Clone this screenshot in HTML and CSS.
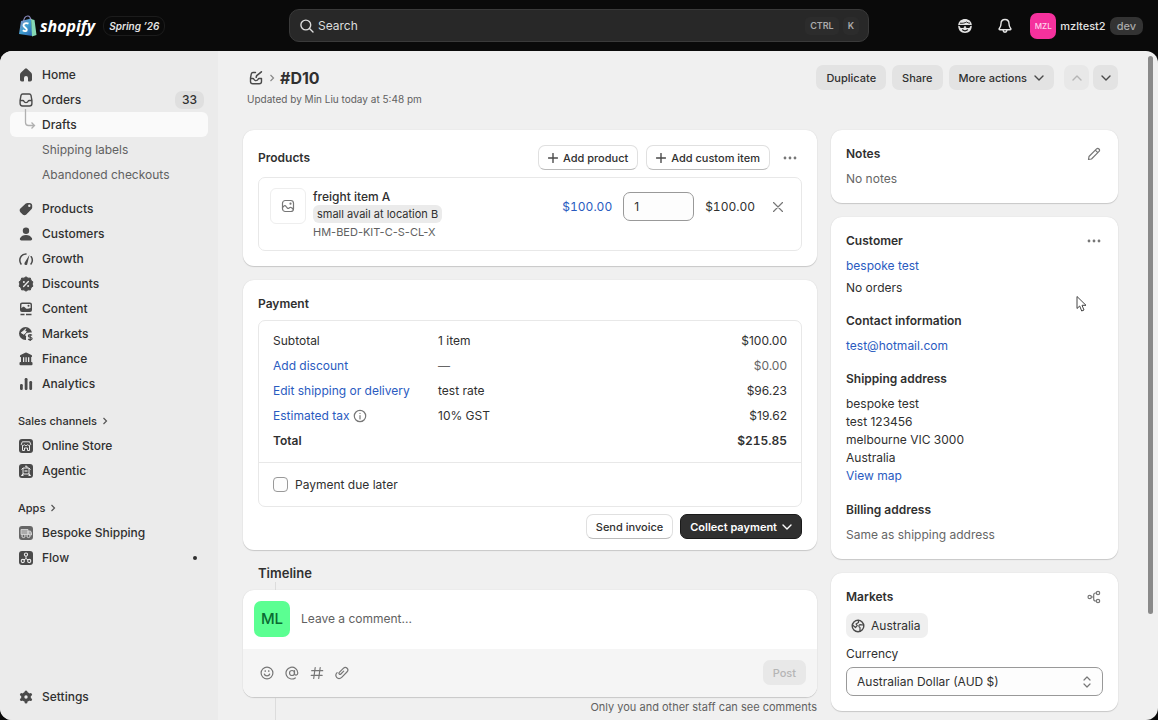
FILE: index.html
```html
<!DOCTYPE html>
<html lang="en">
<head>
    <meta charset="UTF-8">
    <title>#D10 · Drafts</title>
    <link rel="stylesheet" href="styles.css">
</head>
<body>
<header class="topbar">
    <a class="brand" href="#">
        <svg class="bag" width="19" height="22" viewBox="0 0 19 22">
            <defs>
                <linearGradient id="bagFill" x1="0" y1="0" x2="1" y2="1">
                    <stop offset="0" stop-color="#8f8fc4"/>
                    <stop offset=".5" stop-color="#3f9fd0"/>
                    <stop offset="1" stop-color="#2a5fb0"/>
                </linearGradient>
            </defs>
            <path d="M3 6l10-2.500 1.500 17.500L1 19z" fill="url(#bagFill)"/>
            <path d="M13 3.500l1.500 1 2 .5L18.500 20 14 21.500z" fill="#86d9b4"/>
            <path d="M5.500 6.500C6 3 8 1 9.800 1s2.700 1.500 2.700 4" fill="none" stroke="#8f8fc4" stroke-width="1.200"/>
            <path d="M10.500 8.700C8 7.500 5.300 8.500 5.500 10.700c.2 1.900 3.300 2 3.300 4 0 1.700-2.300 1.800-4 .6" fill="none" stroke="#fff" stroke-width="1.900"/>
        </svg>
        <span class="brand-name">shopify</span>
        <span class="edition">Spring ’26</span>
    </a>
    <label class="search">
        <svg width="14" height="14" viewBox="0 0 14 14"><path d="M9.500 9.500L13 13M10.700 6a4.900 4.900 0 1 1-9.800 0 4.900 4.900 0 0 1 9.800 0z" fill="none" stroke="#ddd" stroke-width="1.400" stroke-linecap="round"/></svg>
        <input class="search-input" type="text" placeholder="Search" aria-label="Search">
        <kbd>CTRL</kbd>
        <kbd>K</kbd>
    </label>
    <div class="account">
        <button class="top-icon" type="button" aria-label="Sidekick">
            <svg width="16" height="16" viewBox="0 0 16 16"><path d="M8 1C4.500 1 1.500 3.300 1.200 7c-.3 5 2.600 8 6.800 8s7.100-3 6.800-8C14.500 3.300 11.500 1 8 1z" fill="#e3e3e3"/><path d="M3 5.200c3 .3 4.800-.2 6.500-1.200 1.100.8 2.300 1.200 3.500 1.200" fill="none" stroke="#111" stroke-width=".9"/><path d="M1.200 7.500h13.600" stroke="#111"/><path d="M2.800 8h4.600v.8c0 1.700-4.600 1.700-4.600 0zM8.600 8h4.600v.8c0 1.700-4.600 1.700-4.600 0z" fill="#111"/><path d="M5.500 11.800c1.500 1.200 3.500 1.200 5 0" fill="none" stroke="#111" stroke-width="1.200" stroke-linecap="round"/></svg>
        </button>
        <button class="top-icon" type="button" aria-label="Notifications">
            <svg width="16" height="16" viewBox="0 0 16 16"><path d="M8 1.500c-2.500 0-4 1.800-4 4.200 0 2.800-.7 3.500-1.700 4.800-.5.700-.1 1.300.6 1.300h10.200c.7 0 1.100-.6.6-1.300C12.700 9.200 12 8.500 12 5.700c0-2.400-1.500-4.200-4-4.200zM6 12.200c.3 2.700 3.700 2.700 4 0" fill="none" stroke="#e3e3e3" stroke-width="1.400" stroke-linejoin="round"/></svg>
        </button>
        <button class="store" type="button">
            <span class="store-avatar">MZL</span>
            <span>mzltest2</span>
            <span class="store-tag">dev</span>
        </button>
    </div>
</header>

<div class="frame">
    <nav class="sidebar">
        <ul class="nav">
            <li><a class="nav-link" href="#">
                <svg width="16" height="16" viewBox="0 0 16 16"><path d="M7 1.800a1.500 1.500 0 0 1 2 0l4 3.700c.6.600 1 1.300 1 2.200v4.800c0 1.100-.8 2-1.800 2H11c-.6 0-1-.4-1-1V11a2 2 0 0 0-4 0v2.500c0 .6-.4 1-1 1H3.800c-1 0-1.800-.9-1.800-2V7.700c0-.9.400-1.600 1-2.200z"/></svg>
                Home</a></li>
            <li><a class="nav-link" href="#">
                <svg class="line" width="16" height="16" viewBox="0 0 16 16"><path d="M4.700 2h6.600c.9 0 1.500.5 1.700 1.300l.9 5v3.200c0 1.400-1 2.500-2.400 2.500h-7A2.500 2.500 0 0 1 2.100 11.500V8.300l.9-5C3.200 2.500 3.800 2 4.700 2zM2.100 8.500h2.600c.6 0 1 .3 1.200.8.700 1.700 3.500 1.700 4.200 0 .2-.5.600-.8 1.200-.8h2.600"/></svg>
                Orders<span class="count">33</span></a></li>
            <li><a class="nav-link current" href="#">
                <svg class="branch" width="16" height="25" viewBox="0 0 16 25"><path d="M7.500-3v13.500c0 2 1 3 3 3h6M13.500 10.500l3 3-3 3"/></svg>
                Drafts</a></li>
            <li><a class="nav-link sub" href="#">Shipping labels</a></li>
            <li><a class="nav-link sub" href="#">Abandoned checkouts</a></li>
        </ul>
        <ul class="nav">
            <li><a class="nav-link" href="#">
                <svg width="16" height="16" viewBox="0 0 16 16"><path fill-rule="evenodd" d="M7.800 2.600c.5-.5 1.100-.7 1.800-.7h2.100c1.400 0 2.500 1.100 2.500 2.500v2c0 .7-.3 1.400-.8 1.900l-5.100 5.200c-1 1-2.600 1-3.600 0l-2.300-2.300c-1-1-1-2.600 0-3.600zM11.300 6a1.200 1.200 0 1 0 0-2.400 1.200 1.200 0 0 0 0 2.400z"/></svg>
                Products</a></li>
            <li><a class="nav-link" href="#">
                <svg width="16" height="16" viewBox="0 0 16 16"><circle cx="8" cy="4.700" r="3.200"/><path d="M2 12.300C3 10 5.300 8.900 8 8.900s5 1.100 6 3.400c.5 1.300-.3 2.200-1.400 2.200H3.400c-1.100 0-1.900-.9-1.400-2.200z"/></svg>
                Customers</a></li>
            <li><a class="nav-link" href="#">
                <svg class="gauge" width="16" height="16" viewBox="0 0 16 16"><path d="M3 13C.2 8.500 2.800 3 8 3M13 13c1.600-2.300 1.600-5.200.2-7.300"/><path class="needle" d="M11.500 3.800L6.600 11.700a1.500 1.500 0 1 0 2.800.8z"/></svg>
                Growth</a></li>
            <li><a class="nav-link" href="#">
                <svg width="16" height="16" viewBox="0 0 16 16"><path d="M8 .8l2 1.400 2.400-.1.600 2.300 1.900 1.500L14.100 8l.8 2.200-1.900 1.400-.6 2.300-2.400-.1-2 1.400-2-1.400-2.400.1-.6-2.300-1.900-1.400L1.900 8l-.8-2.100L3 4.400l.6-2.300 2.400.1z" stroke="#4a4a4a" stroke-linejoin="round"/><path d="M5.600 10.400l4.800-4.800" stroke="#ebebeb" stroke-width="1.400" stroke-linecap="round"/><circle cx="5.900" cy="5.900" r="1" fill="#ebebeb"/><circle cx="10.100" cy="10.100" r="1" fill="#ebebeb"/></svg>
                Discounts</a></li>
            <li><a class="nav-link" href="#">
                <svg width="16" height="16" viewBox="0 0 16 16"><path fill-rule="evenodd" d="M4 1.500h8a2 2 0 0 1 2 2V9a2 2 0 0 1-2 2H4a2 2 0 0 1-2-2V3.500c0-1.100.9-2 2-2zm-.6 5.800C5 4.800 6.300 5.500 8 7.400c1.300.8 2.800 0 4.600-.4V3.700c0-.5-.3-.8-.8-.8H4.200c-.5 0-.8.300-.8.800z"/><circle cx="10.500" cy="4.700" r="1"/><path d="M2.500 13.500h4M8 13.500h5.500" stroke="#4a4a4a" stroke-width="1.400"/></svg>
                Content</a></li>
            <li><a class="nav-link" href="#">
                <svg width="16" height="16" viewBox="0 0 16 16"><circle cx="7.500" cy="7.500" r="6.500"/><path d="M8 2.500L6.600 4.600l1.700 1L6 8.300 3 6.500M14 7h-3.500c-2.500 0-3.500 2-2 3.500v4H14z" stroke="#ebebeb" stroke-width="1" fill="#ebebeb"/><path d="M8 2.500c2 0 4 1 4.700 3.500L9.500 6.500z" fill="#4a4a4a"/><path d="M14 9.300c-1-1-3.600-.9-3.600.6 0 1.800 3.700.9 3.700 2.700 0 1.500-2.900 1.600-3.900.4M12.200 8v7" fill="none" stroke="#4a4a4a" stroke-width="1.200"/></svg>
                Markets</a></li>
            <li><a class="nav-link" href="#">
                <svg width="16" height="16" viewBox="0 0 16 16"><path d="M7.200 1.700a2 2 0 0 1 1.600 0l4.600 2.200c1.100.6.800 2.300-.5 2.300H3.100c-1.300 0-1.600-1.700-.5-2.300zM3 6h2v6H3zM6.200 6h1.300v6H6.200zM8.700 6H10v6H8.700zM11.300 6h1.900v6h-1.900z"/><rect x="1.500" y="11" width="13" height="3.200" rx="1"/></svg>
                Finance</a></li>
            <li><a class="nav-link" href="#">
                <svg width="16" height="16" viewBox="0 0 16 16"><rect x="2" y="8" width="2.800" height="6" rx="1.200"/><rect x="6.700" y="2" width="2.800" height="12" rx="1.200"/><rect x="11.300" y="5" width="2.800" height="9" rx="1.200"/></svg>
                Analytics</a></li>
        </ul>
        <h2 class="nav-title">Sales channels
            <svg width="6" height="8" viewBox="0 0 6 8"><path d="M1.500 1l3 3-3 3"/></svg>
        </h2>
        <ul class="nav">
            <li><a class="nav-link" href="#">
                <svg width="16" height="16" viewBox="0 0 16 16"><rect x="1" y="1" width="14" height="14" rx="3"/><path d="M4.300 3.800h7.400l1 2.700c-.8 1.400-2.300 1.200-3 .2-.9 1.200-2.500 1.200-3.400 0-.7 1-2.200 1.200-3-.2zM4.500 8v4.500h2V10h3v2.500h2V8" fill="none" stroke="#ebebeb"/></svg>
                Online Store</a></li>
            <li><a class="nav-link" href="#">
                <svg width="16" height="16" viewBox="0 0 16 16"><rect x="1" y="1" width="14" height="14" rx="3"/><path d="M5 5h6v6H5zM7 3.200h2V5M3.500 6.500L5 5M12.500 6.500L11 5M3.500 12.200L5.500 10.800M12.500 12.200l-2-1.400M3.300 12.500h2.200M10.500 12.500h2.200" fill="none" stroke="#ebebeb"/><path d="M6.500 7h3v2h-3z" fill="#aaa"/></svg>
                Agentic</a></li>
        </ul>
        <h2 class="nav-title">Apps
            <svg width="6" height="8" viewBox="0 0 6 8"><path d="M1.500 1l3 3-3 3"/></svg>
        </h2>
        <ul class="nav">
            <li><a class="nav-link" href="#">
                <svg width="16" height="16" viewBox="0 0 16 16"><rect x="1" y="1" width="14" height="14" rx="3" fill="#666"/><path d="M3 4.500h7v5H3zM10 6h2.500l1 2v2H10z" fill="#aaa" stroke="#ddd" stroke-width=".8"/><circle cx="5.500" cy="11" r="1.600" fill="#666" stroke="#ddd"/><circle cx="10.500" cy="11" r="1.600" fill="#666" stroke="#ddd"/></svg>
                Bespoke Shipping</a></li>
            <li><a class="nav-link" href="#">
                <svg width="16" height="16" viewBox="0 0 16 16"><rect x="1" y="1" width="14" height="14" rx="3"/><path d="M8 6v2.500L5 10.500M8 8.500l3 2" stroke="#ebebeb" fill="none"/><g fill="#4a4a4a" stroke="#ebebeb" stroke-width="1.100"><circle cx="8" cy="4.600" r="1.600"/><circle cx="4.800" cy="11" r="1.600"/><circle cx="11.200" cy="11" r="1.600"/></g></svg>
                Flow<span class="dot"></span></a></li>
        </ul>
        <ul class="nav settings">
            <li><a class="nav-link" href="#">
                <svg width="16" height="16" viewBox="0 0 16 16"><circle cx="8" cy="8" r="3.300" fill="none" stroke="#4a4a4a" stroke-width="3.200"/><circle cx="8" cy="2.900" r="1.500"/><circle cx="8" cy="13.100" r="1.500"/><circle cx="3.500" cy="5.400" r="1.500"/><circle cx="12.500" cy="5.400" r="1.500"/><circle cx="3.500" cy="10.600" r="1.500"/><circle cx="12.500" cy="10.600" r="1.500"/></svg>
                Settings</a></li>
        </ul>
    </nav>

    <main class="page">
        <div class="page-head">
            <div>
                <div class="crumbs">
                    <a href="#" aria-label="Drafts"><svg class="line" width="16" height="16" viewBox="0 0 16 16"><path d="M7.500 2.500H5c-.8 0-1.500.5-1.700 1.300L2.500 8v3.500c0 1.400 1 2.300 2.300 2.300h6.400c1.300 0 2.300-.9 2.300-2.300V8.500M2.500 8.500h2.300c.5 0 .9.300 1.100.8.700 1.700 3.500 1.700 4.200 0 .2-.5.600-.8 1.100-.8h2.300"/><path d="M8.200 7.300l.5-1.700 4.700-3.800" stroke-width="1.600"/></svg></a>
                    <svg class="crumb-arrow" width="6" height="8" viewBox="0 0 6 8"><path d="M1.500 1l3 3-3 3"/></svg>
                    <h1>#D10</h1>
                </div>
                <p class="updated">Updated by Min Liu today at 5:48 pm</p>
            </div>
            <div class="actions">
                <button class="btn" type="button">Duplicate</button>
                <button class="btn" type="button">Share</button>
                <button class="btn" type="button">More actions
                    <svg width="10" height="6" viewBox="0 0 10 6"><path d="M1 1l4 4 4-4"/></svg>
                </button>
                <div class="pager">
                    <button class="btn square" type="button" aria-label="Previous" disabled><svg width="10" height="6" viewBox="0 0 10 6"><path d="M1 5l4-4 4 4"/></svg></button>
                    <button class="btn square" type="button" aria-label="Next"><svg width="10" height="6" viewBox="0 0 10 6"><path d="M1 1l4 4 4-4"/></svg></button>
                </div>
            </div>
        </div>

        <div class="columns">
            <div class="column">
                <section class="card">
                    <div class="card-head">
                        <h2>Products</h2>
                        <button class="btn outline" type="button">
                            <svg width="10" height="10" viewBox="0 0 10 10"><path d="M5 .5v9M.5 5h9"/></svg>
                            Add product</button>
                        <button class="btn outline" type="button">
                            <svg width="10" height="10" viewBox="0 0 10 10"><path d="M5 .5v9M.5 5h9"/></svg>
                            Add custom item</button>
                        <button class="icon-btn more" type="button" aria-label="More"><svg width="14" height="4" viewBox="0 0 14 4"><circle cx="2" cy="2" r="1.400"/><circle cx="7" cy="2" r="1.400"/><circle cx="12" cy="2" r="1.400"/></svg></button>
                    </div>
                    <div class="box product">
                        <div class="thumb">
                            <svg class="line grey" width="14" height="14" viewBox="0 0 14 14"><rect x="1.500" y="1.500" width="11" height="11" rx="2.800"/><path d="M1.500 8.500l1.300-1.300c.7-.7 1.600-.7 2.200.1l1.200 1.500c.5.700 1.300.8 2 .3l.7-.5c.6-.4 1.300-.3 1.800.2l1.500 1.400"/><circle cx="9.500" cy="4.700" r=".5"/></svg>
                        </div>
                        <div class="product-info">
                            <a class="product-name" href="#">freight item A</a>
                            <span class="variant">small avail at location B</span>
                            <span class="sku">HM-BED-KIT-C-S-CL-X</span>
                        </div>
                        <a class="price" href="#">$100.00</a>
                        <input class="quantity" type="text" value="1" aria-label="Quantity">
                        <span class="line-total">$100.00</span>
                        <button class="icon-btn" type="button" aria-label="Remove"><svg width="10" height="10" viewBox="0 0 10 10"><path d="M.5.5l9 9M9.500.5l-9 9"/></svg></button>
                    </div>
                </section>

                <section class="card payment">
                    <h2>Payment</h2>
                    <div class="box">
                        <table class="summary">
                            <tr><td>Subtotal</td><td>1 item</td><td>$100.00</td></tr>
                            <tr><td><a href="#">Add discount</a></td><td class="muted">—</td><td class="muted">$0.00</td></tr>
                            <tr><td><a href="#">Edit shipping or delivery</a></td><td>test rate</td><td>$96.23</td></tr>
                            <tr><td><div class="tax"><a href="#">Estimated tax</a>
                                <svg class="line grey" width="14" height="14" viewBox="0 0 14 14"><circle cx="7" cy="7" r="5.700"/><path d="M7 6.500V10M7 4.300v.1"/></svg></div></td><td>10% GST</td><td>$19.62</td></tr>
                            <tr class="total"><td>Total</td><td></td><td>$215.85</td></tr>
                        </table>
                        <label class="due-later">
                            <input type="checkbox">
                            Payment due later
                        </label>
                    </div>
                    <div class="card-foot">
                        <button class="btn outline" type="button">Send invoice</button>
                        <button class="btn primary" type="button">Collect payment
                            <svg width="10" height="6" viewBox="0 0 10 6"><path d="M1 1l4 4 4-4"/></svg>
                        </button>
                    </div>
                </section>

                <section class="timeline">
                    <h2>Timeline</h2>
                    <div class="timeline-body">
                        <form class="comment" action="#">
                            <div class="comment-write">
                                <span class="avatar">ML</span>
                                <input type="text" placeholder="Leave a comment..." aria-label="Comment">
                            </div>
                            <div class="comment-tools">
                                <button class="tool" type="button" aria-label="Emoji"><svg class="line grey" width="14" height="14" viewBox="0 0 14 14"><circle cx="7" cy="7" r="5.900"/><path d="M4.300 8c.6 2.500 4.800 2.500 5.400 0M5.200 4.700v.8M8.800 4.700v.8"/></svg></button>
                                <button class="tool" type="button" aria-label="Mention"><svg class="line grey" width="14" height="14" viewBox="0 0 14 14"><circle cx="7" cy="7" r="2.500"/><path d="M9.500 4.500v3.200c0 2 3.300 1.800 3.300-.7a5.900 5.900 0 1 0-2.500 4.900"/></svg></button>
                                <button class="tool" type="button" aria-label="Hashtag"><svg class="line grey" width="14" height="14" viewBox="0 0 14 14"><path d="M5.200 1.500L3.700 12.500M10.200 1.500L8.700 12.500M1.700 4.700h11M1.200 9.300h11"/></svg></button>
                                <button class="tool" type="button" aria-label="Attach"><svg class="line grey" width="14" height="14" viewBox="0 0 14 14"><path d="M8.700 5.200L5.900 8c-1.100 1.100-2.700-.5-1.600-1.600l4-4c2.700-2.600 6.200 1 3.600 3.600L6.700 11.300c-3.600 3.600-7.800-1.300-4.600-4.600"/></svg></button>
                                <button class="btn post" type="submit" disabled>Post</button>
                            </div>
                        </form>
                        <p class="staff-note">Only you and other staff can see comments</p>
                    </div>
                </section>
            </div>

            <div class="column">
                <section class="card side">
                    <div class="side-head">
                        <h2>Notes</h2>
                        <button class="icon-btn" type="button" aria-label="Edit notes"><svg class="line grey" width="14" height="14" viewBox="0 0 14 14"><path d="M1.500 12.500l.5-3 7.300-7.300c1.900-1.900 4.400.6 2.500 2.500L4.500 12zM8.300 3.200l2.500 2.500"/></svg></button>
                    </div>
                    <p class="muted">No notes</p>
                </section>

                <section class="card side customer">
                    <div class="side-head">
                        <h2>Customer</h2>
                        <button class="icon-btn" type="button" aria-label="More"><svg width="14" height="4" viewBox="0 0 14 4"><circle cx="2" cy="2" r="1.400"/><circle cx="7" cy="2" r="1.400"/><circle cx="12" cy="2" r="1.400"/></svg></button>
                    </div>
                    <a href="#">bespoke test</a>
                    <p class="orders">No orders</p>
                    <h3>Contact information</h3>
                    <a href="#">test@hotmail.com</a>
                    <h3>Shipping address</h3>
                    <address>bespoke test<br>test 123456<br>melbourne VIC 3000<br>Australia<br><a href="#">View map</a></address>
                    <h3>Billing address</h3>
                    <p class="muted">Same as shipping address</p>
                    <svg class="pointer" width="12" height="18" viewBox="0 0 12 18"><path d="M1 1.500v12l2.700-2.500 2 5 2.300-1-2-4.700h4z" fill="#fff" stroke="#444"/></svg>
                </section>

                <section class="card side">
                    <div class="side-head">
                        <h2>Markets</h2>
                        <button class="icon-btn" type="button" aria-label="View markets"><svg class="line grey" width="14" height="14" viewBox="0 0 14 14"><circle cx="2.700" cy="7" r="1.700"/><circle cx="11" cy="3" r="1.700"/><circle cx="11" cy="11" r="1.700"/><path d="M9.300 3H8.500C7.300 3 6.700 4 6.700 5v4c0 1 .6 2 1.800 2h.8M4.400 7h2.300"/></svg></button>
                    </div>
                    <span class="market">
                        <svg class="line" width="14" height="14" viewBox="0 0 14 14"><circle cx="7" cy="7" r="5.800"/><path d="M1.500 6l3 2.500 1.800-1.800L5 5l2.500-1.500V1.300M12.500 6L9 5.700C7.500 6 7.500 8 9 8.500v3.800" stroke-width="1.200"/></svg>
                        Australia
                    </span>
                    <label class="currency-label" for="currency">Currency</label>
                    <div class="select">
                        <select id="currency"><option>Australian Dollar (AUD $)</option></select>
                        <svg class="line grey" width="8" height="12" viewBox="0 0 8 12"><path d="M1 4l3-3 3 3M1 8l3 3 3-3"/></svg>
                    </div>
                </section>
            </div>
        </div>
    </main>
    <div class="scrollbar"><div class="scroll-thumb"></div></div>
</div>
</body>
</html>
```
FILE: styles.css
```css
* {
    box-sizing: border-box;
}

body {
    margin: 0;
    height: 100vh;
    display: flex;
    flex-direction: column;
    overflow: hidden;
    background: #0a0a0a;
    color: #303030;
    font-family: Inter, "Liberation Sans", sans-serif;
    font-size: 12px;
    line-height: 18px;
}

h1, h2, h3, p, ul {
    margin: 0;
    padding: 0;
}

h2, h3 {
    font-size: 12px;
    font-weight: 600;
}

ul {
    list-style: none;
}

a {
    color: #2a5bbf;
    text-decoration: none;
}

button, input, select {
    font: inherit;
    color: inherit;
}

button {
    border: none;
    background: none;
    padding: 0;
}

svg {
    display: block;
    flex: none;
}

.line {
    fill: none;
    stroke: #4a4a4a;
    stroke-width: 1.4;
    stroke-linecap: round;
    stroke-linejoin: round;
}

.line.grey {
    stroke: #777;
    stroke-width: 1.2;
}

.muted {
    color: #666;
}

/* top bar */
.topbar {
    flex: none;
    height: 51px;
    display: grid;
    grid-template-columns: 1fr 580px 1fr;
    align-items: center;
    padding: 0 15px;
}

.brand {
    display: flex;
    align-items: center;
    padding-left: 3px;
    color: #fff;
}

.brand-name {
    margin-left: 3px;
    font-family: "Open Sans", sans-serif;
    font-size: 16px;
    font-weight: 700;
    font-style: italic;
}

.edition {
    margin-left: 8px;
    padding: 0 5px;
    border: 1px solid #1c1c1c;
    border-radius: 9px;
    font-size: 10px;
    font-weight: 600;
    font-style: italic;
    color: #e3e3e3;
}

.search {
    display: flex;
    align-items: center;
    gap: 4px;
    height: 33px;
    padding: 0 9px 0 10px;
    border: 1px solid #3a3a3a;
    border-radius: 10px;
    background: #282828;
}

.search-input {
    flex: 1;
    min-width: 0;
    padding: 0;
    border: none;
    outline: none;
    background: none;
    color: #ddd;
}

.search-input::placeholder {
    color: #ddd;
    opacity: 1;
}

kbd {
    padding: 0 5px;
    border-radius: 5px;
    background: #2c2c2c;
    color: #aaa;
    font-family: inherit;
    font-size: 9px;
    font-weight: 600;
}

.account {
    display: flex;
    justify-content: flex-end;
    align-items: center;
    gap: 24px;
}

.store {
    display: flex;
    align-items: center;
    gap: 4px;
    margin-left: -7px;
    color: #e3e3e3;
    font-size: 11px;
    font-weight: 550;
}

.store-avatar {
    width: 26px;
    line-height: 26px;
    border-radius: 7px;
    background: #f5319d;
    color: #ffd5ec;
    font-size: 8px;
    text-align: center;
}

.store-tag {
    padding: 0 7px;
    border-radius: 7px;
    background: #333;
    color: #aaa;
    font-weight: 500;
}

/* frame */
.frame {
    flex: 1;
    min-height: 0;
    display: flex;
    overflow: hidden;
    border-radius: 12px;
    background: #f0f0f0;
}

.sidebar {
    flex: none;
    width: 218px;
    display: flex;
    flex-direction: column;
    padding: 11px 10px;
    background: #ebebeb;
}

.nav + .nav {
    margin-top: 9px;
}

.nav .nav-link {
    display: flex;
    align-items: center;
    gap: 8px;
    height: 25px;
    padding: 0 8px;
    border-radius: 6px;
    color: #303030;
    font-weight: 500;
}

.nav-link svg {
    fill: #4a4a4a;
}

.nav-link svg.line {
    fill: none;
}

.nav-link .gauge {
    fill: none;
    stroke: #4a4a4a;
    stroke-width: 1.5;
    stroke-linecap: round;
}

.gauge .needle {
    fill: #4a4a4a;
    stroke: none;
}

.nav-link.current {
    background: #fafafa;
}

.nav-link svg.branch {
    fill: none;
    stroke: #b0b0b0;
    stroke-width: 1.3;
    overflow: visible;
}

.nav .nav-link.sub {
    padding-left: 32px;
    color: #616161;
    font-weight: 400;
}

.count {
    margin-left: auto;
    margin-right: -4px;
    padding: 0 7px;
    border-radius: 7px;
    background: #dfdfdf;
}

.dot {
    width: 4px;
    height: 4px;
    margin-left: auto;
    margin-right: 3px;
    border-radius: 50%;
    background: #303030;
}

.nav-title {
    display: flex;
    align-items: center;
    gap: 5px;
    margin-top: 13px;
    padding: 3px 8px;
    font-size: 11px;
    font-weight: 500;
}

.nav-title svg {
    fill: none;
    stroke: #555;
    stroke-width: 1.2;
}

.nav.settings {
    margin-top: auto;
}

/* page */
.page {
    flex: 1;
    min-width: 0;
    padding: 14px 30px 0 25px;
    overflow: hidden;
}

.scrollbar {
    flex: none;
    width: 10px;
    padding-top: 5px;
}

.scroll-thumb {
    width: 5px;
    height: 84%;
    border-radius: 3px;
    background: #8a8a8a;
}

.page-head {
    display: flex;
    justify-content: space-between;
    align-items: flex-start;
    margin-bottom: 22px;
}

.crumbs {
    display: flex;
    align-items: center;
    gap: 5px;
    height: 25px;
    padding-left: 5px;
}

.crumb-arrow {
    fill: none;
    stroke: #888;
    stroke-width: 1.2;
}

h1 {
    font-size: 16px;
    font-weight: 650;
}

.updated {
    padding-left: 4px;
    color: #616161;
    font-size: 10px;
}

.actions {
    display: flex;
    gap: 6px;
}

.pager {
    display: flex;
    gap: 4px;
    margin-left: 4px;
}

.btn {
    display: flex;
    align-items: center;
    justify-content: center;
    gap: 7px;
    height: 25px;
    padding: 0 10px;
    border-radius: 7px;
    background: #e3e3e3;
    font-size: 11px;
    font-weight: 550;
    white-space: nowrap;
}

.btn svg, .icon-btn svg {
    fill: none;
    stroke: #4a4a4a;
    stroke-width: 1.4;
    stroke-linecap: round;
    stroke-linejoin: round;
}

.btn.square {
    width: 25px;
    padding: 0;
}

.btn:disabled {
    background: #e8e8e8;
    color: #b5b5b5;
}

.btn:disabled svg {
    stroke: #b5b5b5;
}

.btn.outline, .btn.primary {
    gap: 5px;
    padding: 0 9px;
}

.btn.outline {
    border: 1px solid #e0e0e0;
    border-bottom-color: #bbb;
    background: #fff;
}

.btn.primary {
    border: 1px solid #1a1a1a;
    background: #303030;
    color: #fff;
    font-weight: 600;
}

.btn.primary svg {
    stroke: #fff;
}

.icon-btn {
    display: grid;
    place-items: center;
}

.icon-btn svg {
    stroke: #777;
    stroke-width: 1.2;
}

.icon-btn circle {
    fill: #777;
    stroke: none;
}

.icon-btn .line circle {
    fill: none;
    stroke: #777;
}

.columns {
    display: grid;
    grid-template-columns: 2fr 1fr;
    gap: 14px;
    align-items: start;
}

.column {
    display: grid;
    gap: 14px;
    min-width: 0;
}

.card {
    padding: 15px;
    border-radius: 11px;
    background: #fff;
    box-shadow: 0 1px 1px #c8c8c8, 0 0 1px #ccc;
}

.card-head {
    display: flex;
    align-items: center;
    gap: 8px;
    margin-bottom: 7px;
}

.card-head h2 {
    margin-right: auto;
}

.icon-btn.more {
    width: 24px;
}

.box {
    border: 1px solid #e8e8e8;
    border-radius: 7px;
}

.product {
    display: flex;
    align-items: flex-start;
    padding: 10px 18px 9px 11px;
}

.thumb {
    display: grid;
    place-items: center;
    width: 36px;
    height: 36px;
    border: 1px solid #eee;
    border-radius: 6px;
}

.product-info {
    flex: 1;
    display: flex;
    flex-direction: column;
    align-items: flex-start;
    margin-left: 7px;
}

.product-name {
    line-height: 17px;
    color: #303030;
    font-weight: 500;
}

.variant {
    padding: 0 4px;
    border-radius: 6px;
    background: #ebebeb;
    font-size: 11px;
}

.sku {
    color: #616161;
    font-size: 11px;
}

.price, .line-total, .product .icon-btn {
    height: 38px;
    line-height: 38px;
}

.price, .line-total {
    font-variant-numeric: tabular-nums;
}

.quantity {
    width: 71px;
    height: 29px;
    margin: 4px 11px 0;
    padding: 0 10px;
    border: 1px solid #999;
    border-radius: 7px;
    background: #fdfdfd;
}

.product .icon-btn {
    margin-left: 18px;
}

.card.payment {
    padding-bottom: 11px;
}

.payment h2 {
    margin-bottom: 7px;
}

.summary {
    width: 100%;
    padding: 7px 14px 9px;
    border-spacing: 0;
}

.summary td {
    height: 25px;
    padding: 0;
}

.summary td:first-child {
    width: 165px;
}

.summary td:last-child {
    text-align: right;
}

.total {
    font-weight: 600;
}

.total td:last-child {
    font-variant-numeric: tabular-nums;
}

.tax {
    display: flex;
    align-items: center;
    gap: 4px;
}

.due-later {
    display: flex;
    align-items: center;
    gap: 7px;
    height: 44px;
    padding: 0 14px;
    border-top: 1px solid #e8e8e8;
}

.due-later input {
    appearance: none;
    width: 15px;
    height: 15px;
    margin: 0;
    border: 1px solid #999;
    border-radius: 4px;
    background: #fdfdfd;
}

.card-foot {
    display: flex;
    justify-content: flex-end;
    gap: 7px;
    margin-top: 7px;
}

/* timeline */
.timeline h2 {
    padding-left: 15px;
    font-size: 13px;
}

/* the rail runs behind the comment card */
.timeline-body {
    padding-top: 8px;
    background: linear-gradient(#dcdcdc, #dcdcdc) 32px 0 / 1px 100% no-repeat;
}

.comment {
    overflow: hidden;
    border-radius: 11px;
    background: #fff;
    box-shadow: 0 1px 1px #c8c8c8, 0 0 1px #ccc;
}

.comment-write {
    display: flex;
    align-items: center;
    gap: 11px;
    padding: 11px 11px 12px;
}

.comment-write input {
    flex: 1;
    padding: 0;
    border: none;
    outline: none;
}

.comment-write input::placeholder {
    color: #616161;
    opacity: 1;
}

.avatar {
    width: 36px;
    line-height: 36px;
    border-radius: 7px;
    background: #5bff92;
    color: #0a6b32;
    font-size: 15px;
    font-weight: 450;
    text-align: center;
}

.comment-tools {
    display: flex;
    align-items: center;
    gap: 11px;
    padding: 11px 11px 12px 17px;
    background: #f5f5f5;
}

.btn.post {
    margin-left: auto;
}

.staff-note {
    padding: 1px 0 20px;
    color: #616161;
    font-size: 11px;
    text-align: right;
}

/* right column */
.card.side {
    display: flex;
    flex-direction: column;
    align-items: stretch;
}

.side-head {
    display: flex;
    justify-content: space-between;
    align-items: center;
    margin-bottom: 7px;
}

.side-head .icon-btn {
    width: 18px;
    height: 18px;
}

.side h3 {
    margin: 15px 0 7px;
}

.orders {
    margin-top: 4px;
}

address {
    padding-bottom: 1px;
    font-style: normal;
}

.customer {
    position: relative;
}

.pointer {
    position: absolute;
    top: 78px;
    right: 30px;
}

.market {
    display: flex;
    align-items: center;
    align-self: flex-start;
    gap: 6px;
    height: 25px;
    padding: 0 8px 0 5px;
    border-radius: 7px;
    background: #efefef;
}

.currency-label {
    margin: 7px 0 4px;
}

.select {
    display: grid;
    align-items: center;
}

.select select, .select svg {
    grid-area: 1 / 1;
}

.select select {
    appearance: none;
    width: 100%;
    height: 29px;
    padding: 0 10px;
    border: 1px solid #999;
    border-radius: 7px;
    background: #fdfdfd;
}

.select svg {
    justify-self: end;
    margin-right: 12px;
    pointer-events: none;
}
```
